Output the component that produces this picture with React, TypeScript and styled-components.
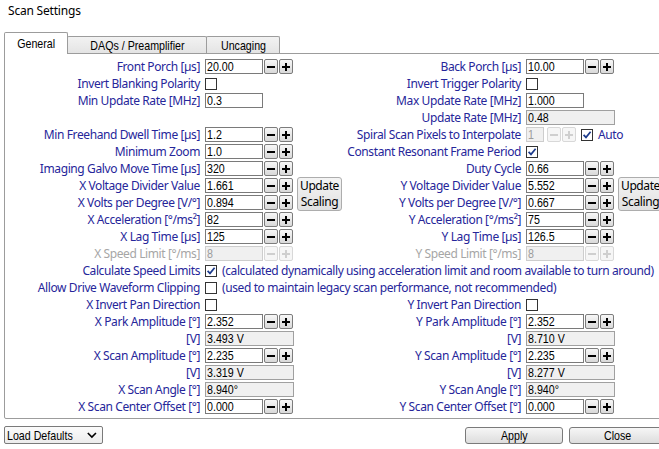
import React from "react";
import styled, { createGlobalStyle } from "styled-components";

const UI_FONT = `"Noto Sans", "Open Sans", sans-serif`;
const WIN_FONT = `"Liberation Sans", Arial, sans-serif`;
const LABEL = "#26269a";
const DISABLED = "#a6a6a6";

const GlobalStyle = createGlobalStyle`
  html, body { margin: 0; padding: 0; background: #fff; }
  body { width: 659px; height: 449px; overflow: hidden; }
`;

const Window = styled.div`
  width: 671px;
  height: 449px;
  background: #fff;
  font-family: ${UI_FONT};
  letter-spacing: -0.4px;
  display: flex;
  flex-direction: column;
`;

const TitleBar = styled.div`
  height: 32px;
  padding-left: 8px;
  font-size: 12px;
  letter-spacing: -0.2px;
  line-height: 22px;
  color: #000;
`;

/* Condensed Windows-Forms text (Arial Narrow look) */
const Narrow = styled.span<{ $origin?: "left" | "center" }>`
  display: inline-block;
  white-space: nowrap;
  letter-spacing: 0;
  transform: scaleX(0.82);
  transform-origin: ${(p) => p.$origin ?? "left"} center;
`;

const TabStrip = styled.div`
  display: flex;
  align-items: flex-end;
  height: 21px;
  margin-left: 4px;
  position: relative;
  z-index: 1;
`;

const Tab = styled.div<{ $active?: boolean; $w: number }>`
  box-sizing: border-box;
  width: ${(p) => p.$w}px;
  height: ${(p) => (p.$active ? 22 : 17)}px;
  margin-bottom: ${(p) => (p.$active ? -1 : 0)}px;
  margin-left: ${(p) => (p.$active ? 0 : -1)}px;
  border: 1px solid #9c9c9c;
  border-bottom: none;
  border-radius: 2px 2px 0 0;
  background: ${(p) => (p.$active ? "#fff" : "linear-gradient(#f2f2f2, #e4e4e4)")};
  font-family: ${WIN_FONT};
  font-size: 13px;
  color: #000;
  display: flex;
  align-items: center;
  justify-content: center;
  padding-top: ${(p) => (p.$active ? 0 : 1)}px;
`;

const Panel = styled.div`
  box-sizing: border-box;
  margin-left: 4px;
  width: 663px;
  height: 366px;
  border: 1px solid #9c9c9c;
  border-radius: 0 0 2px 2px;
  padding-top: 4px;
`;

const Form = styled.div`
  display: grid;
  grid-template-columns: 200px 91px 46px 184px 91px 46px;
  grid-auto-rows: 17px;
`;

const Label = styled.div<{ $col: number; $disabled?: boolean }>`
  grid-column: ${(p) => p.$col};
  min-width: 0;
  display: flex;
  justify-content: flex-end;
  align-items: center;
  padding-right: 5px;
  white-space: nowrap;
  font-size: 12px;
  color: ${(p) => (p.$disabled ? DISABLED : LABEL)};
`;

const Controls = styled.div<{ $col: number; $span?: number }>`
  grid-column: ${(p) => p.$col} / span ${(p) => p.$span ?? 1};
  display: flex;
  align-items: center;
  gap: 1px;
  white-space: nowrap;
`;

type BoxState = "edit" | "readonly" | "disabled";

const TextBox = styled.div<{ $w: number; $state?: BoxState }>`
  box-sizing: border-box;
  flex: none;
  width: ${(p) => p.$w}px;
  height: 15px;
  border: 1px solid
    ${(p) => (p.$state === "disabled" ? "#cdcdcd" : p.$state === "readonly" ? "#a0a0a0" : "#7a7a7a")};
  background: ${(p) => (p.$state && p.$state !== "edit" ? "#f0f0f0" : "#fff")};
  color: ${(p) => (p.$state === "disabled" ? "#9c9c9c" : "#000")};
  font-family: ${WIN_FONT};
  font-size: 13px;
  line-height: 13px;
  padding-left: 1px;
  overflow: hidden;
`;

const SpinBtn = styled.div<{ $disabled?: boolean; $gap?: number }>`
  box-sizing: border-box;
  flex: none;
  width: 14px;
  height: 15px;
  margin-left: ${(p) => p.$gap ?? 0}px;
  border: 1px solid ${(p) => (p.$disabled ? "#d8d8d8" : "#7c7c7c")};
  border-radius: 2px;
  background: ${(p) => (p.$disabled ? "#f6f6f6" : "linear-gradient(#f7f7f7, #d9d9d9)")};
  color: ${(p) => (p.$disabled ? "#cfcfcf" : "#000")};
  display: flex;
  align-items: center;
  justify-content: center;
`;

const CheckBox = styled.div<{ $gap?: number }>`
  box-sizing: border-box;
  flex: none;
  width: 12px;
  height: 12px;
  margin-left: ${(p) => p.$gap ?? 0}px;
  border: 1px solid #333;
  background: #fff;
  display: flex;
  align-items: center;
  justify-content: center;
`;

const Note = styled.span<{ $gap?: number }>`
  margin-left: ${(p) => p.$gap ?? 4}px;
  font-size: 12px;
  color: ${LABEL};
`;

const ScaleButton = styled.div<{ $col: number }>`
  grid-column: ${(p) => p.$col};
  grid-row: span 2;
  box-sizing: border-box;
  margin: 0 0 0 1px;
  width: 45px;
  height: 34px;
  border: 1px solid #adadad;
  border-radius: 3px;
  background: linear-gradient(#f4f4f4, #e1e1e1);
  font-size: 12px;
  line-height: 16.5px;
  color: #000;
  text-align: center;
  white-space: nowrap;
  display: flex;
  flex-direction: column;
  justify-content: center;
`;

const Footer = styled.div`
  display: flex;
  align-items: center;
  padding: 7px 4px 0 4px;
`;

const ComboBox = styled.div`
  box-sizing: border-box;
  width: 99px;
  height: 18px;
  border: 1px solid #7a7a7a;
  border-radius: 2px;
  background: linear-gradient(#fbfbfb, #ececec);
  display: flex;
  align-items: center;
  justify-content: space-between;
  padding: 0 5px 0 2px;
  font-family: ${WIN_FONT};
  font-size: 13px;
  color: #000;
`;

const Spacer = styled.div`
  flex: 1;
`;

const DialogButton = styled.div<{ $gap?: number }>`
  box-sizing: border-box;
  width: 98px;
  height: 17px;
  margin-left: ${(p) => p.$gap ?? 0}px;
  border: 1px solid #7a7a7a;
  border-radius: 3px;
  background: linear-gradient(#f6f6f6, #dddddd);
  font-family: ${WIN_FONT};
  font-size: 13px;
  color: #000;
  display: flex;
  align-items: center;
  justify-content: center;
`;

const Minus = () => (
  <svg width="8" height="8" viewBox="0 0 8 8">
    <rect x="0" y="3" width="8" height="2" fill="currentColor" />
  </svg>
);

const Plus = () => (
  <svg width="8" height="8" viewBox="0 0 8 8">
    <rect x="0" y="3" width="8" height="2" fill="currentColor" />
    <rect x="3" y="0" width="2" height="8" fill="currentColor" />
  </svg>
);

const Check = () => (
  <svg width="10" height="10" viewBox="0 0 10 10">
    <path d="M1.6 4.8 L4 7.4 L8.6 1.8" fill="none" stroke="#1b3a8c" strokeWidth="1.7" />
  </svg>
);

const Chevron = () => (
  <svg width="12" height="8" viewBox="0 0 12 8">
    <path d="M1 1.5 L6 6.5 L11 1.5" fill="none" stroke="#000" strokeWidth="2" />
  </svg>
);

type Side = "L" | "R";
const labelCol = (s: Side) => (s === "L" ? 1 : 4);
const ctrlCol = (s: Side) => (s === "L" ? 2 : 5);

const Spin = ({ side, label, value, disabled }: { side: Side; label: string; value: string; disabled?: boolean }) => (
  <>
    <Label $col={labelCol(side)} $disabled={disabled}>
      {label}
    </Label>
    <Controls $col={ctrlCol(side)}>
      <TextBox $w={58} $state={disabled ? "disabled" : "edit"}>
        <Narrow>{value}</Narrow>
      </TextBox>
      <SpinBtn $disabled={disabled}>
        <Minus />
      </SpinBtn>
      <SpinBtn $disabled={disabled}>
        <Plus />
      </SpinBtn>
    </Controls>
  </>
);

const Text = ({ side, label, value }: { side: Side; label: string; value: string }) => (
  <>
    <Label $col={labelCol(side)}>{label}</Label>
    <Controls $col={ctrlCol(side)}>
      <TextBox $w={58}>
        <Narrow>{value}</Narrow>
      </TextBox>
    </Controls>
  </>
);

const ReadOnly = ({ side, label, value }: { side: Side; label: string; value: string }) => (
  <>
    <Label $col={labelCol(side)}>{label}</Label>
    <Controls $col={ctrlCol(side)}>
      <TextBox $w={89} $state="readonly">
        <Narrow>{value}</Narrow>
      </TextBox>
    </Controls>
  </>
);

const Flag = ({ side, label, checked }: { side: Side; label: string; checked?: boolean }) => (
  <>
    <Label $col={labelCol(side)}>{label}</Label>
    <Controls $col={ctrlCol(side)}>
      <CheckBox>{checked && <Check />}</CheckBox>
    </Controls>
  </>
);

const NoteFlag = ({ label, checked, note }: { label: string; checked?: boolean; note: string }) => (
  <>
    <Label $col={1}>{label}</Label>
    <Controls $col={2} $span={5}>
      <CheckBox>{checked && <Check />}</CheckBox>
      <Note>{note}</Note>
    </Controls>
  </>
);

export default function App() {
  return (
    <>
      <GlobalStyle />
      <Window>
        <TitleBar>Scan Settings</TitleBar>
        <TabStrip>
          <Tab $active $w={64}>
            <Narrow $origin="center">General</Narrow>
          </Tab>
          <Tab $w={140}>
            <Narrow $origin="center">DAQs / Preamplifier</Narrow>
          </Tab>
          <Tab $w={74}>
            <Narrow $origin="center">Uncaging</Narrow>
          </Tab>
        </TabStrip>
        <Panel>
          <Form>
            <Spin side="L" label="Front Porch [µs]" value="20.00" />
            <Spin side="R" label="Back Porch [µs]" value="10.00" />

            <Flag side="L" label="Invert Blanking Polarity" />
            <Flag side="R" label="Invert Trigger Polarity" />

            <Text side="L" label="Min Update Rate [MHz]" value="0.3" />
            <Text side="R" label="Max Update Rate [MHz]" value="1.000" />

            <ReadOnly side="R" label="Update Rate [MHz]" value="0.48" />

            <Spin side="L" label="Min Freehand Dwell Time [µs]" value="1.2" />
            <Label $col={4}>Spiral Scan Pixels to Interpolate</Label>
            <Controls $col={5} $span={2}>
              <TextBox $w={18} $state="disabled">
                <Narrow>1</Narrow>
              </TextBox>
              <SpinBtn $disabled $gap={2}>
                <Minus />
              </SpinBtn>
              <SpinBtn $disabled>
                <Plus />
              </SpinBtn>
              <CheckBox $gap={4}>
                <Check />
              </CheckBox>
              <Note $gap={4}>Auto</Note>
            </Controls>

            <Spin side="L" label="Minimum Zoom" value="1.0" />
            <Flag side="R" label="Constant Resonant Frame Period" checked />

            <Spin side="L" label="Imaging Galvo Move Time [µs]" value="320" />
            <Spin side="R" label="Duty Cycle" value="0.66" />

            <Spin side="L" label="X Voltage Divider Value" value="1.661" />
            <ScaleButton $col={3}>
              <span>Update</span>
              <span>Scaling</span>
            </ScaleButton>
            <Spin side="R" label="Y Voltage Divider Value" value="5.552" />
            <ScaleButton $col={6}>
              <span>Update</span>
              <span>Scaling</span>
            </ScaleButton>

            <Spin side="L" label="X Volts per Degree [V/°]" value="0.894" />
            <Spin side="R" label="Y Volts per Degree [V/°]" value="0.667" />

            <Spin side="L" label="X Acceleration [°/ms²]" value="82" />
            <Spin side="R" label="Y Acceleration [°/ms²]" value="75" />

            <Spin side="L" label="X Lag Time [µs]" value="125" />
            <Spin side="R" label="Y Lag Time [µs]" value="126.5" />

            <Spin side="L" label="X Speed Limit [°/ms]" value="8" disabled />
            <Spin side="R" label="Y Speed Limit [°/ms]" value="8" disabled />

            <NoteFlag
              label="Calculate Speed Limits"
              checked
              note="(calculated dynamically using acceleration limit and room available to turn around)"
            />
            <NoteFlag
              label="Allow Drive Waveform Clipping"
              note="(used to maintain legacy scan performance, not recommended)"
            />

            <Flag side="L" label="X Invert Pan Direction" />
            <Flag side="R" label="Y Invert Pan Direction" />

            <Spin side="L" label="X Park Amplitude [°]" value="2.352" />
            <Spin side="R" label="Y Park Amplitude [°]" value="2.352" />

            <ReadOnly side="L" label="[V]" value="3.493 V" />
            <ReadOnly side="R" label="[V]" value="8.710 V" />

            <Spin side="L" label="X Scan Amplitude [°]" value="2.235" />
            <Spin side="R" label="Y Scan Amplitude [°]" value="2.235" />

            <ReadOnly side="L" label="[V]" value="3.319 V" />
            <ReadOnly side="R" label="[V]" value="8.277 V" />

            <ReadOnly side="L" label="X Scan Angle [°]" value="8.940°" />
            <ReadOnly side="R" label="Y Scan Angle [°]" value="8.940°" />

            <Spin side="L" label="X Scan Center Offset [°]" value="0.000" />
            <Spin side="R" label="Y Scan Center Offset [°]" value="0.000" />
          </Form>
        </Panel>
        <Footer>
          <ComboBox>
            <Narrow>Load Defaults</Narrow>
            <Chevron />
          </ComboBox>
          <Spacer />
          <DialogButton>
            <Narrow $origin="center">Apply</Narrow>
          </DialogButton>
          <DialogButton $gap={6}>
            <Narrow $origin="center">Close</Narrow>
          </DialogButton>
        </Footer>
      </Window>
    </>
  );
}
